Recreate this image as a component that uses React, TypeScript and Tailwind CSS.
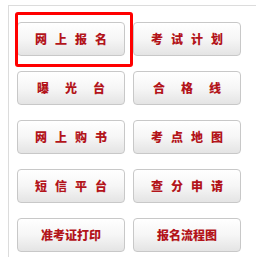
const items = [
  '网上报名',
  '考试计划',
  '曝光台',
  '合格线',
  '网上购书',
  '考点地图',
  '短信平台',
  '查分申请',
  '准考证打印',
  '报名流程图',
]

function gapFor(label: string) {
  if (label.length === 3) return 'gap-[16px]'
  if (label.length === 4) return 'gap-[8px]'
  return 'gap-0'
}

function NavButton({ label, highlight }: { label: string; highlight?: boolean }) {
  return (
    <div className="relative">
      <a
        href="#"
        className="flex h-[34px] w-[108px] items-center justify-center rounded-[4px] border border-[#c8c8c8] bg-gradient-to-b from-white via-[#f6f6f6] to-[#e4e4e4] text-[12px] font-black text-[#b3141a]"
      >
        <span className={`flex ${gapFor(label)}`}>
          {label.split('').map((ch, i) => (
            <span key={i}>{ch}</span>
          ))}
        </span>
      </a>
      {highlight && (
        <div className="pointer-events-none absolute left-[-2px] top-[-10px] h-[55px] w-[118px] rounded-[3px] border-[3px] border-[#f00]" />
      )}
    </div>
  )
}

export default function App() {
  return (
    <div
      className="h-[257px] w-[256px] overflow-hidden bg-white"
      style={{ fontFamily: '"Noto Sans CJK SC", "Noto Sans", sans-serif' }}
    >
      <div className="ml-[8px] mt-[5px] h-[252px] border-l border-t border-[#dcdcdc] pl-[8px] pt-[16px]">
        <div className="grid w-[224px] grid-cols-[108px_108px] gap-x-[8px] gap-y-[15px]">
          {items.map((label, i) => (
            <NavButton key={label} label={label} highlight={i === 0} />
          ))}
        </div>
      </div>
    </div>
  )
}
